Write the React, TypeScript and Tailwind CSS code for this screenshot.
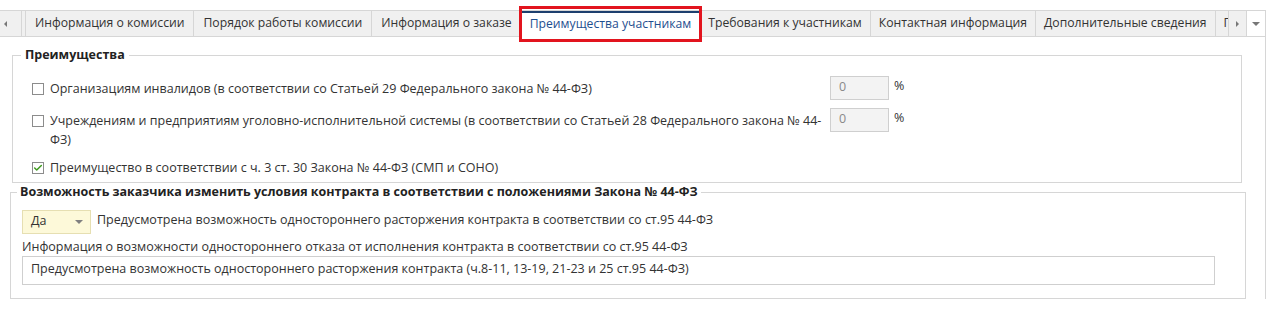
import { Check } from "lucide-react";

const tabs = [
  "Информация о комиссии",
  "Порядок работы комиссии",
  "Информация о заказе",
  "Преимущества участникам",
  "Требования к участникам",
  "Контактная информация",
  "Дополнительные сведения",
  "Протоколы",
];

const ACTIVE = "Преимущества участникам";

function Checkbox({ checked }: { checked?: boolean }) {
  return (
    <span className="mt-[7px] flex h-[12px] w-[12px] shrink-0 items-center justify-center border border-[#8c8c8c] bg-white">
      {checked && <Check className="h-[10px] w-[10px] text-[#3f9a1f]" strokeWidth={3.5} />}
    </span>
  );
}

function PercentInput() {
  return (
    <div className="flex shrink-0 items-start gap-[5px]">
      <div className="flex h-[24px] w-[59px] items-center border border-[#cfcfcf] bg-[#f3f3f3] px-[8px] text-[#8a8a8a]">
        0
      </div>
      <span className="mt-[1px] text-[#333]">%</span>
    </div>
  );
}

export default function App() {
  return (
    <div className="h-[310px] w-[1268px] overflow-hidden bg-white pt-[10px] font-['Open_Sans',sans-serif] text-[12.5px] text-[#333]">
      <div className="w-[1266px] border-r border-[#d6d6d6]">
        {/* Tab strip */}
        <div className="flex h-[27px] border-y border-[#d6d6d6] bg-[#f0f0f0] text-[12.2px]">
          <div className="flex w-[22px] shrink-0 items-center justify-center border-r border-[#d6d6d6] pr-[10px]">
            <span className="h-0 w-0 border-y-[3px] border-r-[3px] border-y-transparent border-r-[#777]" />
          </div>
          <div className="w-[4px] shrink-0 border-r border-[#d6d6d6]" />
          <div className="flex w-[1202px] overflow-x-clip">
            {tabs.map((t, i) =>
              t === ACTIVE ? (
                <div key={t} className="relative -mb-px shrink-0 border-r border-[#d6d6d6] bg-white">
                  <div className="flex h-full items-center whitespace-nowrap border-t-2 border-[#1d3f6e] px-[8px] pb-[2px] text-[#1f4f8f]">{t}</div>
                  <div className="pointer-events-none absolute -bottom-[5px] -left-[3px] -right-[3px] -top-[5px] border-[3px] border-[#e2141e]" />
                </div>
              ) : (
                <div
                  key={t}
                  className={
                    i < 3
                      ? "flex shrink-0 items-center whitespace-nowrap border-r border-[#d6d6d6] px-[9px] pb-[1px]"
                      : "flex shrink-0 items-center whitespace-nowrap border-r border-[#d6d6d6] px-[8px] pb-[1px]"
                  }
                >
                  {t}
                </div>
              ),
            )}
          </div>
          <div className="flex w-[19px] shrink-0 items-center justify-center border-x border-[#d6d6d6]">
            <span className="h-0 w-0 border-y-[3px] border-l-[3px] border-y-transparent border-l-[#777]" />
          </div>
          <div className="flex flex-1 items-center justify-center bg-white">
            <span className="h-0 w-0 border-x-[4px] border-t-[4px] border-x-transparent border-t-[#777]" />
          </div>
        </div>

        {/* Content */}
        <div className="h-[262px] pt-[9px]">
          <fieldset className="ml-[12px] w-[1230px] border border-[#d6d6d6] pb-[5px] pl-[8px] pr-[8px] pt-[11px]">
            <legend className="px-[4px] font-bold text-[#222]">Преимущества</legend>
            <div className="flex flex-col gap-[8px] pl-[11px]">
              <div className="flex items-start">
                <div className="flex w-[798px] items-start gap-[6px]">
                  <Checkbox />
                  <span className="pt-[3px] leading-[19px]">
                    Организациям инвалидов (в соответствии со Статьей 29 Федерального закона № 44-ФЗ)
                  </span>
                </div>
                <PercentInput />
              </div>
              <div className="flex items-start">
                <div className="flex w-[798px] items-start gap-[6px]">
                  <Checkbox />
                  <span className="pt-[3px] leading-[19px]">
                    Учреждениям и предприятиям уголовно-исполнительной системы (в соответствии со Статьей 28 Федерального закона № 44-ФЗ)
                  </span>
                </div>
                <PercentInput />
              </div>
              <div className="-mt-[2px] flex items-start gap-[6px]">
                <Checkbox checked />
                <span className="pt-[3px] leading-[19px]">
                  Преимущество в соответствии с ч. 3 ст. 30 Закона № 44-ФЗ (СМП и СОНО)
                </span>
              </div>
            </div>
          </fieldset>

          <fieldset className="ml-[10px] w-[1235px] border border-[#d6d6d6] pb-[13px] pl-[6px] pr-[30px] pt-[8px]">
            <legend className="px-[3px] font-bold text-[#222]">
              Возможность заказчика изменить условия контракта в соответствии с положениями Закона № 44-ФЗ
            </legend>
            <div className="pl-[5px]">
              <div className="flex items-start gap-[6px]">
                <div className="flex h-[24px] w-[69px] items-center justify-between border border-[#e6dfb2] bg-[#fdf9d9] pl-[8px] pr-[7px]">
                  <span>Да</span>
                  <span className="h-0 w-0 border-x-[4px] border-t-[4px] border-x-transparent border-t-[#808080]" />
                </div>
                <span className="leading-[19px]">
                  Предусмотрена возможность одностороннего расторжения контракта в соответствии со ст.95 44-ФЗ
                </span>
              </div>
              <div className="mt-[3px] leading-[19px]">
                Информация о возможности одностороннего отказа от исполнения контракта в соответствии со ст.95 44-ФЗ
              </div>
              <div className="h-[29px] w-[1193px] border border-[#cfcfcf] px-[8px] pt-[2px] leading-[19px]">
                Предусмотрена возможность одностороннего расторжения контракта (ч.8-11, 13-19, 21-23 и 25 ст.95 44-ФЗ)
              </div>
            </div>
          </fieldset>
        </div>
      </div>
    </div>
  );
}
